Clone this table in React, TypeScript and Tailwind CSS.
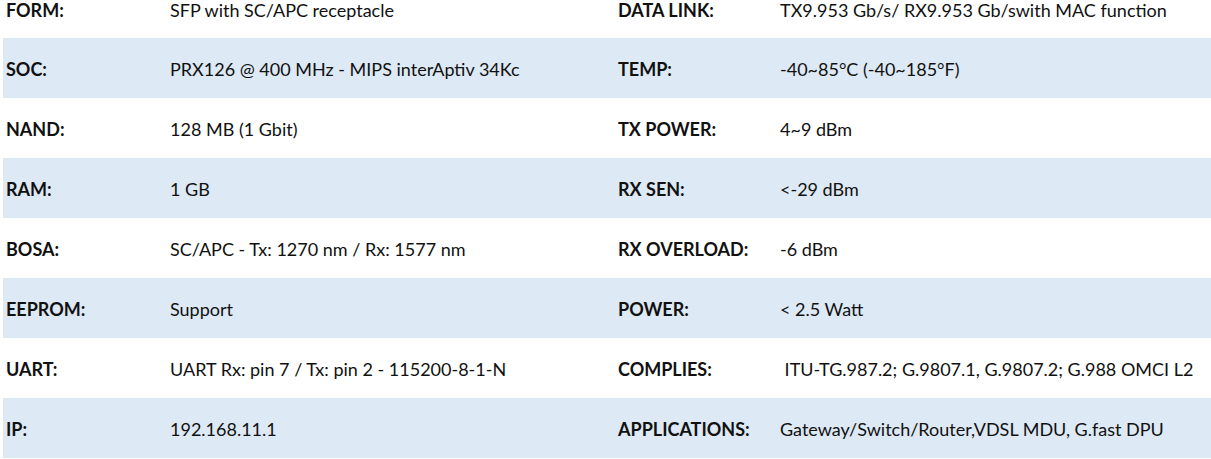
import React from "react";

const rows: [string, string, string, string][] = [
  ["FORM:", "SFP with SC/APC receptacle", "DATA LINK:", "TX9.953 Gb/s/ RX9.953 Gb/swith MAC function"],
  ["SOC:", "PRX126 @ 400 MHz - MIPS interAptiv 34Kc", "TEMP:", "-40~85°C (-40~185°F)"],
  ["NAND:", "128 MB (1 Gbit)", "TX POWER:", "4~9 dBm"],
  ["RAM:", "1 GB", "RX SEN:", "<-29 dBm"],
  ["BOSA:", "SC/APC - Tx: 1270 nm / Rx: 1577 nm", "RX OVERLOAD:", "-6 dBm"],
  ["EEPROM:", "Support", "POWER:", "< 2.5 Watt"],
  ["UART:", "UART Rx: pin 7 / Tx: pin 2 - 115200-8-1-N", "COMPLIES:", "\u00a0ITU-TG.987.2; G.9807.1, G.9807.2; G.988 OMCI L2"],
  ["IP:", "192.168.11.1", "APPLICATIONS:", "Gateway/Switch/Router,VDSL MDU, G.fast DPU"],
];

export default function App() {
  return (
    <div
      className="w-[1211px] h-[459px] overflow-hidden bg-white text-[#111] text-[18px] leading-[18px]"
      style={{ fontFamily: "Lato, 'Noto Sans', sans-serif" }}
    >
      <div className="flex flex-col pl-[3px]">
        {rows.map((r, i) => (
          <div
            key={i}
            className={
              i === 0
                ? "flex h-[38px] items-start pt-[1px] bg-white"
                : `flex h-[60px] items-center pt-[1px] ${i % 2 === 1 ? "bg-[#dde9f5]" : "bg-white"}`
            }
          >
            <div className="w-[167px] pl-[3px] font-bold">{r[0]}</div>
            <div className="w-[448px]">{r[1]}</div>
            <div className="w-[162px] font-bold">{r[2]}</div>
            <div className="flex-1">{r[3]}</div>
          </div>
        ))}
      </div>
    </div>
  );
}
